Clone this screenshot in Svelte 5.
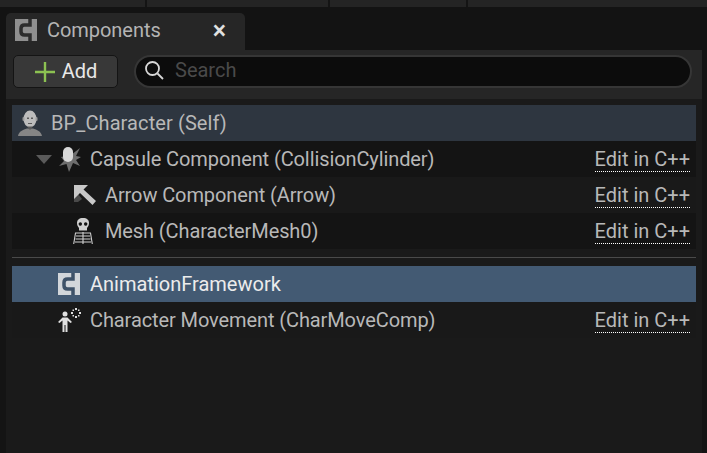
<script lang="ts">
	type Row = {
		label: string;
		icon: string;
		indent: number;
		edit?: boolean;
		arrow?: boolean;
		kind?: string;
	};

	const topRows: Row[] = [
		{ label: 'Capsule Component (CollisionCylinder)', icon: 'capsule', indent: 0, edit: true, arrow: true },
		{ label: 'Arrow Component (Arrow)', icon: 'arrow', indent: 15, edit: true, kind: 'alt' },
		{ label: 'Mesh (CharacterMesh0)', icon: 'mesh', indent: 15, edit: true }
	];
	const bottomRows: Row[] = [
		{ label: 'AnimationFramework', icon: 'class', indent: 0, kind: 'selected' },
		{ label: 'Character Movement (CharMoveComp)', icon: 'move', indent: 0, edit: true, kind: 'alt' }
	];
</script>

{#snippet classIcon(fill: string, cut: string)}
	<svg width="22" height="22" viewBox="0 0 22 22">
		<rect width="22" height="22" fill={fill} />
		<path
			fill="none"
			stroke={cut}
			stroke-width="3.500"
			d="M15 0V6H9.500Q6 6 6 9.500V12.500Q6 16 9.500 16H15V22"
		/>
	</svg>
{/snippet}

{#snippet rowIcon(name: string)}
	{#if name === 'capsule'}
		<svg width="24" height="27" viewBox="0 0 24 27">
			<path fill="#6e6e6e" d="M13 9L22 2L18 10L23 11L18 14L22 20L15 17L11 26L8.500 18L1 20L6 15L3 11L13 9Z" />
			<rect x="5" y="1" width="10" height="15" rx="5" fill="#d8d8d8" />
		</svg>
	{:else if name === 'arrow'}
		<svg width="24" height="22" viewBox="0 0 24 22">
			<path fill="#4a4a4a" d="M1 13L5 10L9 15L5 18H1Z" />
			<path fill="#c8c8c8" d="M1 1H15L10.500 5.500L23 17L19.500 21L7 9L1 15Z" />
		</svg>
	{:else if name === 'mesh'}
		<svg width="20" height="27" viewBox="0 0 20 27" fill="none" stroke="#d0d0d0" stroke-width="1.100">
			<path fill="#d0d0d0" stroke="none" fill-rule="evenodd" d="M10 0C14 0 16 2 16 5C16 8 14.500 9 14 10V12.500H6V10C5.500 9 4 8 4 5C4 2 6 0 10 0ZM6.500 4.500A1.700 1.700 0 1 0 9 6A1.700 1.700 0 0 0 6.500 4.500ZM11 6A1.700 1.700 0 1 0 13.500 4.500A1.700 1.700 0 0 0 11 6Z" />
			<path d="M.7 26L2.500 15H17.500L19.300 26M3 18H17M2.500 21H17.500M2 24H18M10 14V26" />
		</svg>
	{:else if name === 'class'}
		{@render classIcon('#d2d6da', '#3e5268')}
	{:else if name === 'move'}
		<svg width="24" height="25" viewBox="0 0 24 25">
			<circle cx="7" cy="6" r="2.500" fill="#e0e0e0" />
			<path fill="#e0e0e0" d="M0 14L4.500 9.500H9.500L14 14L12.500 15L9.500 12.500V24H7.500V17H6.500V24H4.500V12.500L1.500 15Z" />
			<g fill="#e0e0e0">
				<rect x="17" y="0" width="2" height="2" />
				<rect x="17" y="8" width="2" height="2" />
				<rect x="13" y="4" width="2" height="2" />
				<rect x="21" y="4" width="2" height="2" />
				<rect x="14.500" y="1.500" width="1.500" height="1.500" />
				<rect x="20" y="1.500" width="1.500" height="1.500" />
				<rect x="14.500" y="7" width="1.500" height="1.500" />
				<rect x="20" y="7" width="1.500" height="1.500" />
			</g>
		</svg>
	{/if}
{/snippet}

{#snippet treeRow(row: Row)}
	<div class="row {row.kind ?? ''}">
		<div class="name" style="padding-left: {row.indent}px">
			<span class="caret-slot">
				{#if row.arrow}<span class="caret"></span>{/if}
			</span>
			<span class="icon-slot">{@render rowIcon(row.icon)}</span>
			<span class="label">{row.label}</span>
		</div>
		{#if row.edit}
			<span class="edit">Edit in C++</span>
		{/if}
	</div>
{/snippet}

<div class="window">
	<div class="top-strip">
		<span class="tick"></span>
		<span class="tick"></span>
		<span class="tick"></span>
	</div>

	<div class="tabbar">
		<div class="tab">
			{@render classIcon('#8f8f8f', '#2c2c2c')}
			<span class="tab-title">Components</span>
			<span class="close">×</span>
		</div>
	</div>

	<div class="panel">
		<div class="toolbar">
			<button class="add">
				<svg width="20" height="20" viewBox="0 0 20 20">
					<path fill="#8cc152" d="M8.800 0H11.200V8.800H20V11.200H11.200V20H8.800V11.200H0V8.800H8.800Z" />
				</svg>
				<span>Add</span>
			</button>
			<div class="search">
				<svg width="20" height="20" viewBox="0 0 20 20" fill="none" stroke="#d8d8d8" stroke-width="1.800">
					<circle cx="8.500" cy="8.500" r="6.500" />
					<path d="M13.500 13.500L19 19" />
				</svg>
				<span class="placeholder">Search</span>
			</div>
		</div>

		<div class="tree">
			<div class="row self">
				<div class="name">
					<svg width="26" height="28" viewBox="0 0 26 28">
						<path fill="#858585" d="M1 27C2 22 6 21 10 19.500H16C20 21 24 22 25 27Z" />
						<ellipse cx="13" cy="10" rx="6.500" ry="8.500" fill="#bcbcbc" />
						<rect x="5.500" y="8" width="2" height="4" rx="1" fill="#9c9c9c" />
						<rect x="18.500" y="8" width="2" height="4" rx="1" fill="#9c9c9c" />
						<path fill="#5a5a5a" d="M10 8.500H12V10H10ZM14 8.500H16V10H14ZM11 14H15V15H11ZM10 17.500H16L13 21Z" />
					</svg>
					<span class="label">BP_Character (Self)</span>
				</div>
			</div>

			{#each topRows as row}
				{@render treeRow(row)}
			{/each}

			<div class="divider"></div>

			{#each bottomRows as row}
				{@render treeRow(row)}
			{/each}
		</div>
	</div>
</div>

<style>
	:global(body) {
		background: #141414;
	}
	.window {
		width: 707px;
		height: 453px;
		overflow: hidden;
		display: flex;
		flex-direction: column;
		background: #141414;
		font-family: Roboto, 'Liberation Sans', sans-serif;
		font-size: 20px;
		color: #b8b8b8;
	}
	.top-strip {
		height: 7px;
		flex: none;
		background: #242424;
		display: flex;
		padding-left: 145px;
	}
	.tick {
		width: 2px;
		background: #141414;
		margin-right: 181px;
	}
	.tick:nth-child(2) {
		margin-right: 136px;
	}
	.tabbar {
		height: 43px;
		flex: none;
		display: flex;
		align-items: flex-end;
		padding-left: 6px;
		background: #131313;
	}
	.tab {
		width: 239px;
		height: 37px;
		box-sizing: border-box;
		display: flex;
		align-items: center;
		gap: 10px;
		padding: 0 19px 3px 9px;
		background: #262626;
		border-radius: 5px 5px 0 0;
	}
	.tab-title {
		flex: 1;
		color: #b4b4b4;
		letter-spacing: -0.05px;
	}
	.close {
		font-size: 25px;
		font-weight: 500;
		line-height: 1;
		color: #e0e0e0;
	}
	.panel {
		flex: 1;
		margin: 0 5px 0 6px;
		background: #1a1a1a;
	}
	.toolbar {
		height: 49px;
		box-sizing: border-box;
		display: flex;
		align-items: flex-start;
		gap: 16px;
		padding: 5px 10px 0 7px;
		background: #262626;
	}
	.add {
		width: 105px;
		height: 33px;
		display: flex;
		align-items: center;
		justify-content: center;
		gap: 7px;
		padding: 0 0 0 1px;
		background: #383838;
		border: 1px solid #141414;
		border-radius: 5px;
		font: inherit;
		color: #e8e8e8;
	}
	.add span {
		position: relative;
		top: -1px;
	}
	.search {
		flex: 1;
		height: 33px;
		box-sizing: border-box;
		display: flex;
		align-items: center;
		gap: 11px;
		padding: 0 0 3px 8px;
		background: #0c0c0c;
		border: 2px solid #363636;
		border-radius: 17px;
	}
	.placeholder {
		color: #4a4a4a;
	}
	.tree {
		display: flex;
		flex-direction: column;
		margin: 6px 6px 0;
	}
	.row {
		height: 36px;
		flex: none;
		display: flex;
		align-items: center;
		justify-content: space-between;
		padding-right: 6px;
		background: #141414;
	}
	.row.alt {
		background: #191919;
	}
	.row.self {
		background: #2e3640;
	}
	.row.selected {
		background: #435a73;
		color: #ececec;
	}
	.name {
		display: flex;
		align-items: center;
	}
	.label {
		letter-spacing: -0.1px;
	}
	.selected .label {
		letter-spacing: 0;
	}
	.self .label {
		letter-spacing: 0.1px;
	}
	.self .name {
		gap: 8px;
		padding-left: 5px;
	}
	.caret-slot {
		width: 24px;
		flex: none;
		display: flex;
		justify-content: flex-end;
	}
	.caret {
		border-left: 8px solid transparent;
		border-right: 8px solid transparent;
		border-top: 9px solid #5a5a5a;
		margin-right: -16px;
	}
	.icon-slot {
		width: 54px;
		flex: none;
		display: flex;
		justify-content: flex-start;
		padding-left: 22px;
		box-sizing: border-box;
	}
	.edit {
		border-bottom: 1px dotted #fff;
		line-height: 24px;
	}
	.divider {
		height: 1px;
		margin: 8px 0;
		background: #4a4a4a;
	}
</style>
